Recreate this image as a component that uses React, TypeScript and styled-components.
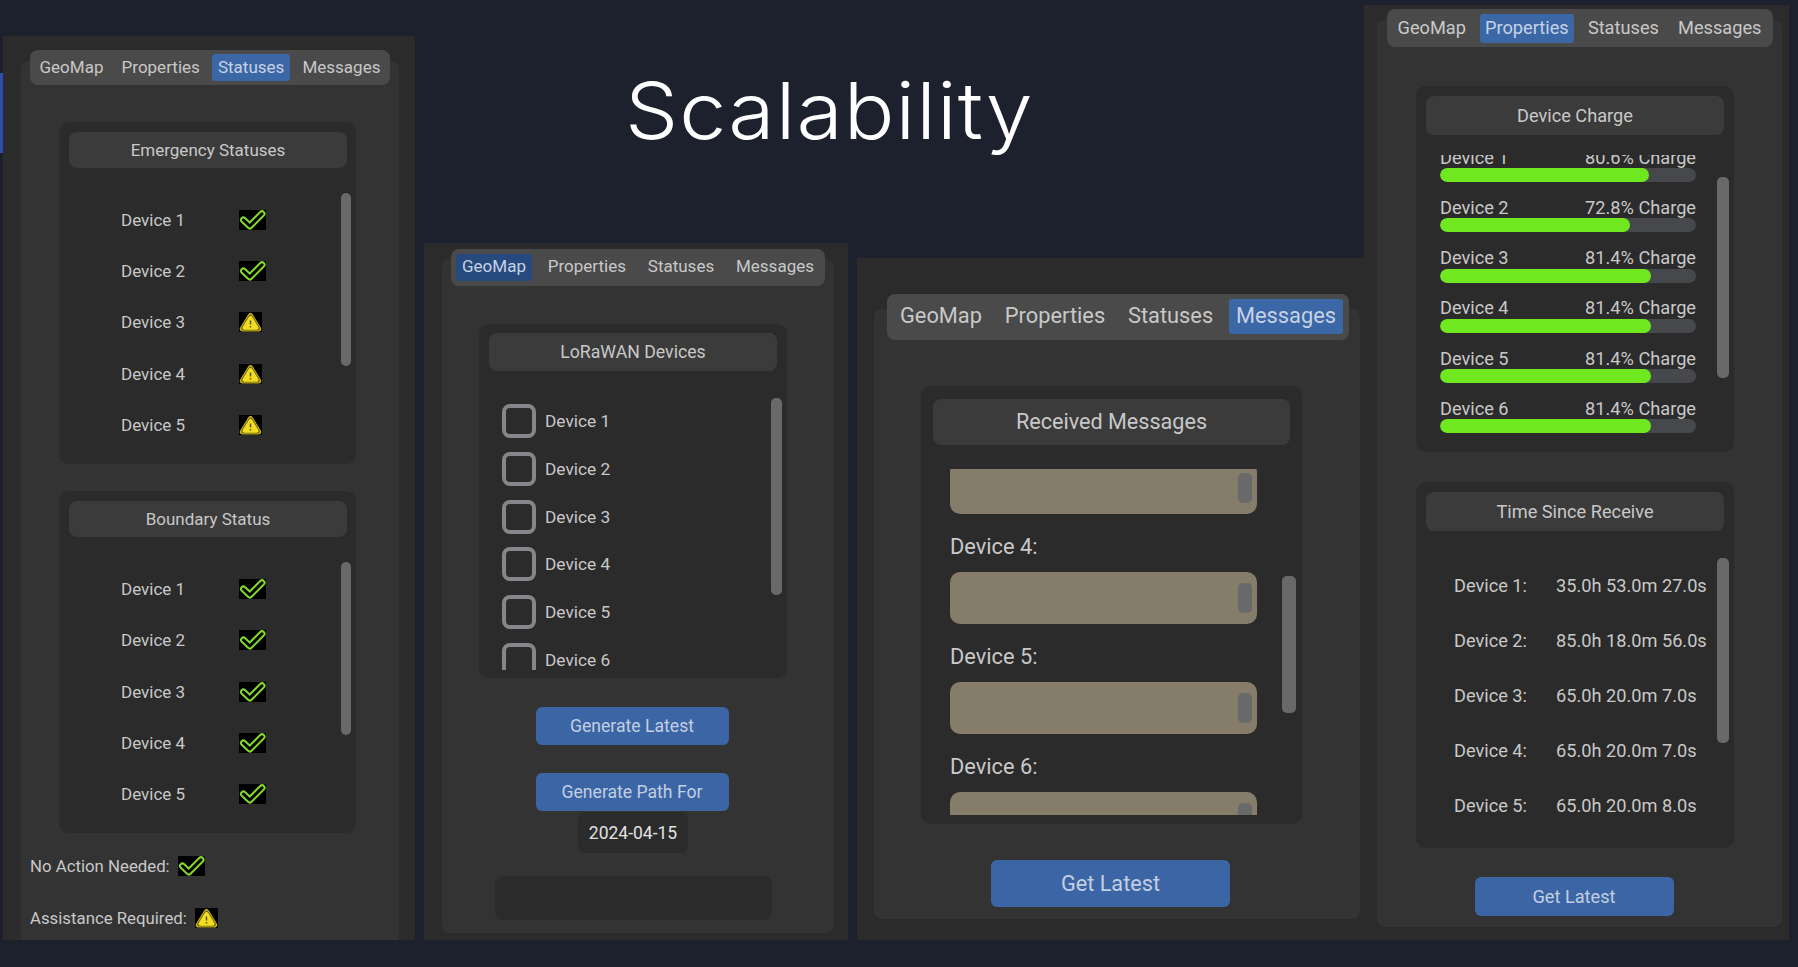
import React from "react";
import styled, { createGlobalStyle } from "styled-components";

const Global = createGlobalStyle`
  html, body { margin: 0; padding: 0; background: #1c212d; height: 967px; overflow: hidden; }
  * { box-sizing: border-box; }
`;

const Page = styled.div`
  width: 1798px;
  height: 967px;
  padding-bottom: 27px;
  display: flex;
  align-items: flex-end;
  overflow: hidden;
  background: #1c212d;
  font-family: Roboto, "Liberation Sans", sans-serif;
  color: #c8c8c8;
`;
const Accent = styled.div`
  width: 3px;
  height: 80px;
  flex: none;
  align-self: flex-start;
  margin-top: 73px;
  background: #2c4fae;
`;
const Middle = styled.div`
  width: 940px;
  flex: none;
  margin-left: 9px;
  display: flex;
  flex-direction: column;
`;
const Title = styled.h1`
  margin: 0 0 82px 201px;
  font: 300 78px/100px Inter, "Open Sans", sans-serif;
  letter-spacing: 1px;
  color: #ffffff;
  transform: scaleX(1.08);
  transform-origin: left center;
`;
const MiddleRow = styled.div`
  display: flex;
  align-items: flex-end;
  gap: 9px;
`;
const Panel = styled.section`
  flex: none;
  width: ${p => p.$w}px;
  height: ${p => p.$h}px;
  padding: ${p => p.$pad};
  background: #2b2b2b;
  overflow: hidden;
`;
const Frame = styled.div`
  height: ${p => p.$h}px;
  background: #333333;
  border-radius: 8px;
  display: flex;
  flex-direction: column;
  align-items: center;
`;
const TabBar = styled.nav`
  flex: none;
  width: ${p => p.$w}px;
  height: ${p => p.$h}px;
  margin-top: ${p => p.$mt}px;
  margin-left: ${p => p.$ml ?? 0}px;
  padding: 0 ${p => p.$px}px;
  border-radius: 8px;
  background: #4a4a4a;
  display: flex;
  align-items: center;
  justify-content: space-between;
  font-size: ${p => p.$fs}px;
`;
const Tab = styled.span`
  height: ${p => p.$h}px;
  padding: 0 ${p => p.$px}px 2px;
  border-radius: 3px;
  display: flex;
  align-items: center;
  background: ${p => (p.$active ? p.$activeColor ?? "#3b67a6" : "transparent")};
  color: ${p => (p.$active ? "#c6d2e4" : "#c8c8c8")};
`;
const Body = styled.div`
  width: ${p => p.$w}px;
  align-self: flex-start;
  margin-left: ${p => p.$ml}px;
  display: flex;
  flex-direction: column;
  align-items: center;
`;
const Group = styled.div`
  position: relative;
  flex: none;
  width: 100%;
  height: ${p => p.$h}px;
  margin-top: ${p => p.$mt}px;
  padding: ${p => p.$pad};
  background: #2b2b2b;
  border-radius: 10px;
`;
const GroupHeader = styled.h2`
  margin: 0;
  height: ${p => p.$h}px;
  border-radius: 8px;
  background: #3b3b3b;
  display: flex;
  align-items: center;
  justify-content: center;
  font-weight: 400;
  font-size: ${p => p.$fs}px;
  color: #c8c8c8;
`;
const Thumb = styled.div`
  position: absolute;
  top: ${p => p.$top}px;
  right: ${p => p.$right}px;
  width: ${p => p.$w}px;
  height: ${p => p.$h}px;
  border-radius: 5px;
  background: #696969;
`;
const StatusList = styled.div`
  margin-top: 26.5px;
`;
const StatusRow = styled.div`
  height: 51.3px;
  padding-left: 52px;
  display: flex;
  align-items: center;
  font-size: 17px;
`;
const StatusName = styled.span`
  width: 117.5px;
`;
const Legend = styled.div`
  align-self: flex-start;
  margin: 7px 0 0 9px;
`;
const LegendRow = styled.div`
  height: 52px;
  display: flex;
  align-items: center;
  gap: 8px;
  font-size: 16.8px;
`;
const CheckList = styled.div`
  height: 280px;
  margin-top: 19px;
  padding: 7.5px 0 0 13px;
  overflow: hidden;
`;
const CheckRow = styled.label`
  height: 47.7px;
  display: flex;
  align-items: center;
  gap: 9px;
  font-size: 17.3px;
`;
const CheckBox = styled.span`
  width: 34px;
  height: 34px;
  flex: none;
  border: 4px solid #85868c;
  border-radius: 8px;
`;
const Button = styled.button`
  flex: none;
  width: ${p => p.$w}px;
  height: ${p => p.$h}px;
  margin: ${p => p.$mt}px 2px 0 0;
  border: 0;
  border-radius: 6px;
  background: #3b65a4;
  color: #c2cfe2;
  font: 400 ${p => p.$fs}px Roboto, sans-serif;
`;
const DateChip = styled.div`
  width: 110px;
  height: 41px;
  margin-top: 1.5px;
  border-radius: 8px;
  background: #2b2b2b;
  display: flex;
  align-items: center;
  justify-content: center;
  font-size: 17.5px;
  color: #e2e2e2;
`;
const EmptyField = styled.div`
  width: 277px;
  height: 44px;
  margin-top: 23px;
  border-radius: 8px;
  background: #2b2b2b;
`;
const MessageList = styled.div`
  height: 346px;
  margin-top: 24.5px;
  padding-left: 17px;
  overflow: hidden;
`;
const MessageLabel = styled.div`
  padding: 20px 0 12px;
  font-size: 21.8px;
  line-height: 26px;
`;
const MessageBox = styled.div`
  position: relative;
  width: 307px;
  height: 52px;
  margin-top: ${p => p.$mt ?? 0}px;
  border-radius: 10px;
  background: #857d69;
`;
const MiniThumb = styled.div`
  position: absolute;
  top: 11px;
  right: 5px;
  width: 14px;
  height: 30px;
  border-radius: 5px;
  background: #696969;
`;
const ChargeList = styled.div`
  height: 290px;
  margin-top: 20px;
  padding-left: 14px;
  overflow: hidden;
`;
const ChargeScroll = styled.div`
  margin-top: -23.3px;
`;
const ChargeRow = styled.div`
  width: 256px;
  height: 50.3px;
  padding-top: 14.3px;
`;
const ChargeText = styled.div`
  height: 22px;
  display: flex;
  align-items: center;
  justify-content: space-between;
  font-size: 18.2px;
`;
const Track = styled.div`
  height: 14px;
  border-radius: 7px;
  background: #47484c;
  overflow: hidden;
`;
const Fill = styled.div`
  height: 100%;
  border-radius: 7px;
  background: #6fe81f;
`;
const TimeList = styled.div`
  margin-top: 27px;
`;
const TimeRow = styled.div`
  height: 55px;
  padding-left: 28px;
  display: flex;
  align-items: center;
  white-space: nowrap;
  font-size: 18.2px;
`;
const TimeName = styled.span`
  width: 102px;
  flex: none;
`;

const CheckIcon = () => (
  <svg width="27" height="20" viewBox="0 0 27 20" style={{ flex: "none" }}>
    <rect width="27" height="20" fill="#000" />
    <path d="M4.5 10 L10.8 16 L23 3.8" fill="none" stroke="#82d92a" strokeWidth="7" strokeLinecap="round" strokeLinejoin="round" />
    <path d="M4.5 10 L10.8 16 L23 3.8" fill="none" stroke="#000" strokeWidth="3" strokeLinecap="round" strokeLinejoin="round" />
  </svg>
);
const TRIANGLE =
  "M11.5 1 C12.5 1 13.3 1.6 14 2.8 L21.8 15.5 C23 17.6 21.8 19.5 19.5 19.5 H3.5 C1.2 19.5 0 17.6 1.2 15.5 L9 2.8 C9.7 1.6 10.5 1 11.5 1Z";
const WarnIcon = () => (
  <svg width="23" height="20" viewBox="0 0 23 20" style={{ flex: "none" }}>
    <rect width="23" height="20" fill="#000" />
    <path d={TRIANGLE} fill="#c9b61f" />
    <path d={TRIANGLE} fill="#75690f" transform="translate(1.5 1.6) scale(0.87)" />
    <path d={TRIANGLE} fill="#f2dd22" transform="translate(3 3.3) scale(0.74)" />
    <path d="M11.5 8.5 V12.6 M11.5 14 V15.4" stroke="#5f5410" strokeWidth="1.5" />
  </svg>
);

const TABS = ["GeoMap", "Properties", "Statuses", "Messages"];

const Tabs = ({ active, w, h, mt, ml, fs, tabH, px, barPx, activeColor }: any) => (
  <TabBar $w={w} $h={h} $mt={mt} $ml={ml} $fs={fs} $px={barPx}>
    {TABS.map(t => (
      <Tab key={t} $active={t === active} $activeColor={activeColor} $h={tabH} $px={px}>
        {t}
      </Tab>
    ))}
  </TabBar>
);

const StatusGroup = ({ title, mt, kinds, thumbTop }: any) => (
  <Group $h={342} $mt={mt} $pad="10px 9px 0 10px">
    <GroupHeader $h={36} $fs={17}>{title}</GroupHeader>
    <StatusList>
      {kinds.map((k: string, i: number) => (
        <StatusRow key={i}>
          <StatusName>Device {i + 1}</StatusName>
          {k === "ok" ? <CheckIcon /> : <WarnIcon />}
        </StatusRow>
      ))}
    </StatusList>
    <Thumb $top={thumbTop} $right={5} $w={10.5} $h={173} />
  </Group>
);

const charges = [
  ["Device 1", "80.6% Charge", 81.6],
  ["Device 2", "72.8% Charge", 74.2],
  ["Device 3", "81.4% Charge", 82.6],
  ["Device 4", "81.4% Charge", 82.6],
  ["Device 5", "81.4% Charge", 82.6],
  ["Device 6", "81.4% Charge", 82.6],
] as const;

const times = [
  ["Device 1:", "35.0h 53.0m 27.0s"],
  ["Device 2:", "85.0h 18.0m 56.0s"],
  ["Device 3:", "65.0h 20.0m 7.0s"],
  ["Device 4:", "65.0h 20.0m 7.0s"],
  ["Device 5:", "65.0h 20.0m 8.0s"],
];

export default function App() {
  return (
    <Page>
      <Global />
      <Accent />
      <Panel $w={412} $h={904} $pad="25px 16px 0 18px">
        <Frame $h={900}>
          <Tabs active="Statuses" w={360} h={35} mt={-11} fs={17} tabH={26.5} px={5.5} barPx={4} />
          <Body $w={297} $ml={38}>
            <StatusGroup title="Emergency Statuses" mt={36.5} kinds={["ok", "ok", "warn", "warn", "warn"]} thumbTop={71} />
            <StatusGroup title="Boundary Status" mt={27.5} kinds={["ok", "ok", "ok", "ok", "ok"]} thumbTop={71} />
          </Body>
          <Legend>
            <LegendRow>No Action Needed: <CheckIcon /></LegendRow>
            <LegendRow>Assistance Required: <WarnIcon /></LegendRow>
          </Legend>
        </Frame>
      </Panel>

      <Middle>
        <Title>Scalability</Title>
        <MiddleRow>
          <Panel $w={424} $h={697} $pad="16px 14px 0 18px">
            <Frame $h={674}>
              <Tabs active="GeoMap" w={374} h={36.5} mt={-10} fs={17} tabH={27} px={6} barPx={5} activeColor="#274a7e" />
              <Body $w={308} $ml={37}>
                <Group $h={354} $mt={38.5} $pad="9px 10px 0 10px">
                  <GroupHeader $h={38} $fs={17.7}>LoRaWAN Devices</GroupHeader>
                  <CheckList>
                    {[1, 2, 3, 4, 5, 6].map(n => (
                      <CheckRow key={n}>
                        <CheckBox />
                        Device {n}
                      </CheckRow>
                    ))}
                  </CheckList>
                  <Thumb $top={74} $right={5} $w={11} $h={197} />
                </Group>
                <Button $w={193} $h={38} $mt={29} $fs={17.6}>Generate Latest</Button>
                <Button $w={193} $h={37.5} $mt={28} $fs={17.6}>Generate Path For</Button>
                <DateChip>2024-04-15</DateChip>
                <EmptyField />
              </Body>
            </Frame>
          </Panel>

          <Panel $w={507} $h={682} $pad="50.5px 4px 0 17px">
            <Frame $h={610.5}>
              <Tabs active="Messages" w={462} h={45.6} mt={-14.5} ml={2} fs={21.8} tabH={35} px={7} barPx={6} />
              <Body $w={381} $ml={47}>
                <Group $h={438} $mt={46.4} $pad="13px 12px 0 12px">
                  <GroupHeader $h={46} $fs={21.6}>Received Messages</GroupHeader>
                  <MessageList>
                    <MessageBox $mt={-7}><MiniThumb /></MessageBox>
                    {[4, 5, 6].map(n => (
                      <div key={n}>
                        <MessageLabel>Device {n}:</MessageLabel>
                        <MessageBox><MiniThumb /></MessageBox>
                      </div>
                    ))}
                  </MessageList>
                  <Thumb $top={190.5} $right={6} $w={14} $h={136.5} />
                </Group>
                <Button $w={239} $h={46.6} $mt={36} $fs={21.7}>Get Latest</Button>
              </Body>
            </Frame>
          </Panel>
        </MiddleRow>
      </Middle>

      <Panel $w={425} $h={935} $pad="15px 7px 0 13px">
        <Frame $h={907}>
          <Tabs active="Properties" w={386} h={38} mt={-11} fs={18.2} tabH={29} px={5.5} barPx={5.5} />
          <Body $w={318} $ml={39}>
            <Group $h={366} $mt={39} $pad="10px 10px 0 10px">
              <GroupHeader $h={39} $fs={18.2}>Device Charge</GroupHeader>
              <ChargeList>
                <ChargeScroll>
                  {charges.map(([name, label, pct]) => (
                    <ChargeRow key={name}>
                      <ChargeText><span>{name}</span><span>{label}</span></ChargeText>
                      <Track><Fill style={{ width: `${pct}%` }} /></Track>
                    </ChargeRow>
                  ))}
                </ChargeScroll>
              </ChargeList>
              <Thumb $top={91} $right={5.5} $w={11.5} $h={201} />
            </Group>
            <Group $h={366} $mt={30} $pad="10px 10px 0 10px">
              <GroupHeader $h={39} $fs={18.2}>Time Since Receive</GroupHeader>
              <TimeList>
                {times.map(([n, v]) => (
                  <TimeRow key={n}><TimeName>{n}</TimeName><span>{v}</span></TimeRow>
                ))}
              </TimeList>
              <Thumb $top={76} $right={5.5} $w={11.5} $h={185} />
            </Group>
            <Button $w={199} $h={39} $mt={29} $fs={18.2}>Get Latest</Button>
          </Body>
        </Frame>
      </Panel>
    </Page>
  );
}
